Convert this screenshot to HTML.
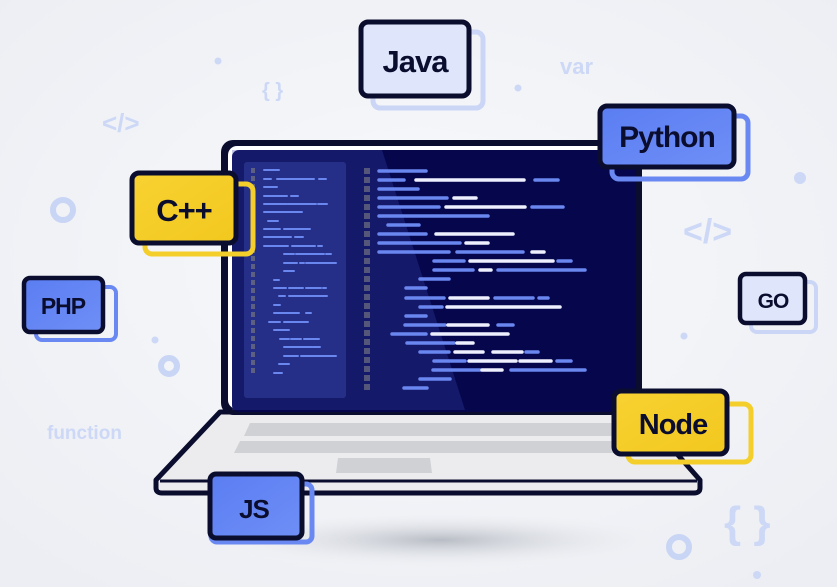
<!DOCTYPE html>
<html><head><meta charset="utf-8"><style>
html,body{margin:0;padding:0;width:837px;height:587px;overflow:hidden;background:#f2f4f8}
svg{display:block}
text{font-family:"Liberation Sans",Arial,sans-serif;font-weight:bold}
</style></head><body>
<svg width="837" height="587" viewBox="0 0 837 587">
<defs>
<radialGradient id="bg" cx="0.5" cy="0.45" r="0.7"><stop offset="0" stop-color="#f8f9fc"/><stop offset="1" stop-color="#eceef3"/></radialGradient>
<radialGradient id="sh" cx="0.5" cy="0.5" r="0.5"><stop offset="0" stop-color="#b8bcc4"/><stop offset="1" stop-color="#eef0f4" stop-opacity="0"/></radialGradient>
<linearGradient id="blu" x1="0" y1="0" x2="1" y2="1"><stop offset="0" stop-color="#5a7df2"/><stop offset="1" stop-color="#6f8ff6"/></linearGradient>
<linearGradient id="yel" x1="0" y1="0" x2="1" y2="1"><stop offset="0" stop-color="#f8d232"/><stop offset="1" stop-color="#f2c81e"/></linearGradient>
</defs>
<rect width="837" height="587" fill="url(#bg)"/>
<ellipse cx="440" cy="540" rx="230" ry="28" fill="url(#sh)"/>

<g fill="#ccd8f6">
<text x="560" y="74" font-size="22">var</text>
<text x="262" y="97" font-size="20" font-weight="normal">{ }</text>
<text x="102" y="132" font-size="26">&lt;/&gt;</text>
<text x="683" y="243" font-size="34">&lt;/&gt;</text>
<text x="47" y="439" font-size="19">function</text>
<text x="724" y="537" font-size="44" font-weight="normal">{ }</text>
<circle cx="218" cy="61" r="3.5"/><circle cx="518" cy="88" r="3.5"/><circle cx="800" cy="178" r="6"/><circle cx="155" cy="340" r="3.5"/><circle cx="684" cy="336" r="3.5"/><circle cx="757" cy="575" r="4"/>
</g>
<g fill="none" stroke="#c9d5f5" stroke-width="6"><circle cx="63" cy="210" r="10"/><circle cx="169" cy="366" r="8"/><circle cx="679" cy="547" r="10"/></g>

<path d="M220 412 L640 412 L700 480 L700 488 Q700 493 694 493 L162 493 Q156 493 156 488 L156 480 Z" fill="#ececee" stroke="#0b0d2e" stroke-width="5" stroke-linejoin="round"/>
<line x1="160" y1="481" x2="697" y2="481" stroke="#0b0d2e" stroke-width="3"/>
<path d="M250 423 L622 423 L627 436 L244 436 Z" fill="#cfd1d5"/>
<path d="M240 441 L632 441 L637 453 L234 453 Z" fill="#cfd1d5"/>
<path d="M338 458 L430 458 L432 473 L336 473 Z" fill="#cfd1d5"/>

<rect x="221" y="140" width="421" height="275" rx="12" fill="#0b0d2e"/>
<rect x="228" y="146" width="408" height="263" rx="9" fill="#ffffff"/>
<rect x="232" y="150" width="404" height="262" rx="7" fill="#05064c"/>
<polygon points="232,150 382,150 465,410 232,410" fill="#3a46b0" opacity="0.3"/>
<rect x="244" y="162" width="102" height="236" rx="3" fill="#2a348e" opacity="0.8"/>
<line x1="253" y1="168" x2="253" y2="374" stroke="#5d6080" stroke-width="4" stroke-dasharray="5 3"/>
<line x1="367" y1="168" x2="367" y2="390" stroke="#54577a" stroke-width="6" stroke-dasharray="6 3"/>
<g stroke-linecap="round" stroke-width="2" stroke="#6a86ef">
<path d="M264 170h15M264 179h7M277 179h37M319 179h7M264 187h13M264 196h23M291 196h7M264 204h23M288 204h28M318 204h9M264 212h38M268 221h10M264 229h16M284 229h26M264 237h27M295 237h8M264 246h24M292 246h23M318 246h4M284 254h10M296 254h28M326 254h5M284 263h13M300 263h4M306 263h30M284 271h10M274 280h5M274 288h12M289 288h14M306 288h15M323 288h3M279 296h6M289 296h38M274 305h6M274 313h25M306 313h5M269 322h11M284 322h24M274 330h15M280 339h9M291 339h10M304 339h15M284 347h13M296 347h16M313 347h7M284 356h14M301 356h12M311 356h25M279 364h10M274 373h8"/>
</g>
<g stroke-linecap="round" stroke-width="3.5">
<path stroke="#6a86ef" d="M379 171h47M379 180h25M535 180h23M379 189h39M379 198h68M379 207h60M532 207h31M379 216h109M388 225h31M379 234h47M379 243h81M379 252h70M457 252h66M434 261h30M558 261h13M434 270h39M498 270h87M420 279h29M406 288h20M406 298h38M495 298h38M539 298h9M420 307h22M406 316h20M405 325h40M498 325h15M392 334h34M407 343h47M420 352h29M526 352h12M434 361h31M557 361h14M433 370h47M511 370h74M420 379h30M404 388h23"/>
<path stroke="#eef0ff" d="M416 180h108M454 198h22M446 207h79M436 234h77M466 243h22M532 252h12M470 261h83M480 270h11M450 298h38M447 307h113M448 325h40M432 334h76M457 343h16M455 352h28M493 352h29M469 361h47M520 361h31M482 370h20"/>
</g>

<rect x="373" y="32" width="110" height="76" rx="7" fill="none" stroke="#cbd6f6" stroke-width="5"/>
<rect x="361" y="22" width="108" height="74" rx="7" fill="#dfe6fb" stroke="#0b0d2e" stroke-width="5"/>
<text x="415" y="72" font-size="31" text-anchor="middle" fill="#0b0d2e" letter-spacing="-1">Java</text>
<rect x="612" y="116" width="136" height="63" rx="7" fill="none" stroke="#6a88f2" stroke-width="5"/>
<rect x="600" y="106" width="134" height="61" rx="7" fill="url(#blu)" stroke="#0b0d2e" stroke-width="5"/>
<text x="667" y="147" font-size="30" text-anchor="middle" fill="#0b0d2e" letter-spacing="-1">Python</text>
<rect x="145" y="184" width="108" height="70" rx="7" fill="none" stroke="#f4cf2b" stroke-width="5"/>
<rect x="132" y="173" width="104" height="70" rx="7" fill="url(#yel)" stroke="#0b0d2e" stroke-width="5"/>
<text x="184" y="221" font-size="31" text-anchor="middle" fill="#0b0d2e" letter-spacing="-1">C++</text>
<rect x="36" y="287" width="80" height="53" rx="6" fill="none" stroke="#6a88f2" stroke-width="4"/>
<rect x="24" y="278" width="79" height="54" rx="6" fill="url(#blu)" stroke="#0b0d2e" stroke-width="4.5"/>
<text x="63" y="314" font-size="23" text-anchor="middle" fill="#0b0d2e" letter-spacing="-1">PHP</text>
<rect x="751" y="282" width="65" height="50" rx="6" fill="none" stroke="#cbd6f6" stroke-width="4"/>
<rect x="740" y="274" width="65" height="49" rx="6" fill="#dfe6fb" stroke="#0b0d2e" stroke-width="4.5"/>
<text x="773" y="308" font-size="21" text-anchor="middle" fill="#0b0d2e" letter-spacing="-1">GO</text>
<rect x="628" y="404" width="123" height="58" rx="7" fill="none" stroke="#f4cf2b" stroke-width="5"/>
<rect x="614" y="391" width="113" height="63" rx="7" fill="url(#yel)" stroke="#0b0d2e" stroke-width="5"/>
<text x="673" y="434" font-size="29" text-anchor="middle" fill="#0b0d2e" letter-spacing="-1">Node</text>
<rect x="211" y="484" width="101" height="58" rx="6" fill="none" stroke="#6a88f2" stroke-width="5"/>
<rect x="210" y="474" width="92" height="64" rx="6" fill="url(#blu)" stroke="#0b0d2e" stroke-width="5"/>
<text x="254" y="518" font-size="26" text-anchor="middle" fill="#0b0d2e" letter-spacing="-1">JS</text>
</svg>
</body></html>
